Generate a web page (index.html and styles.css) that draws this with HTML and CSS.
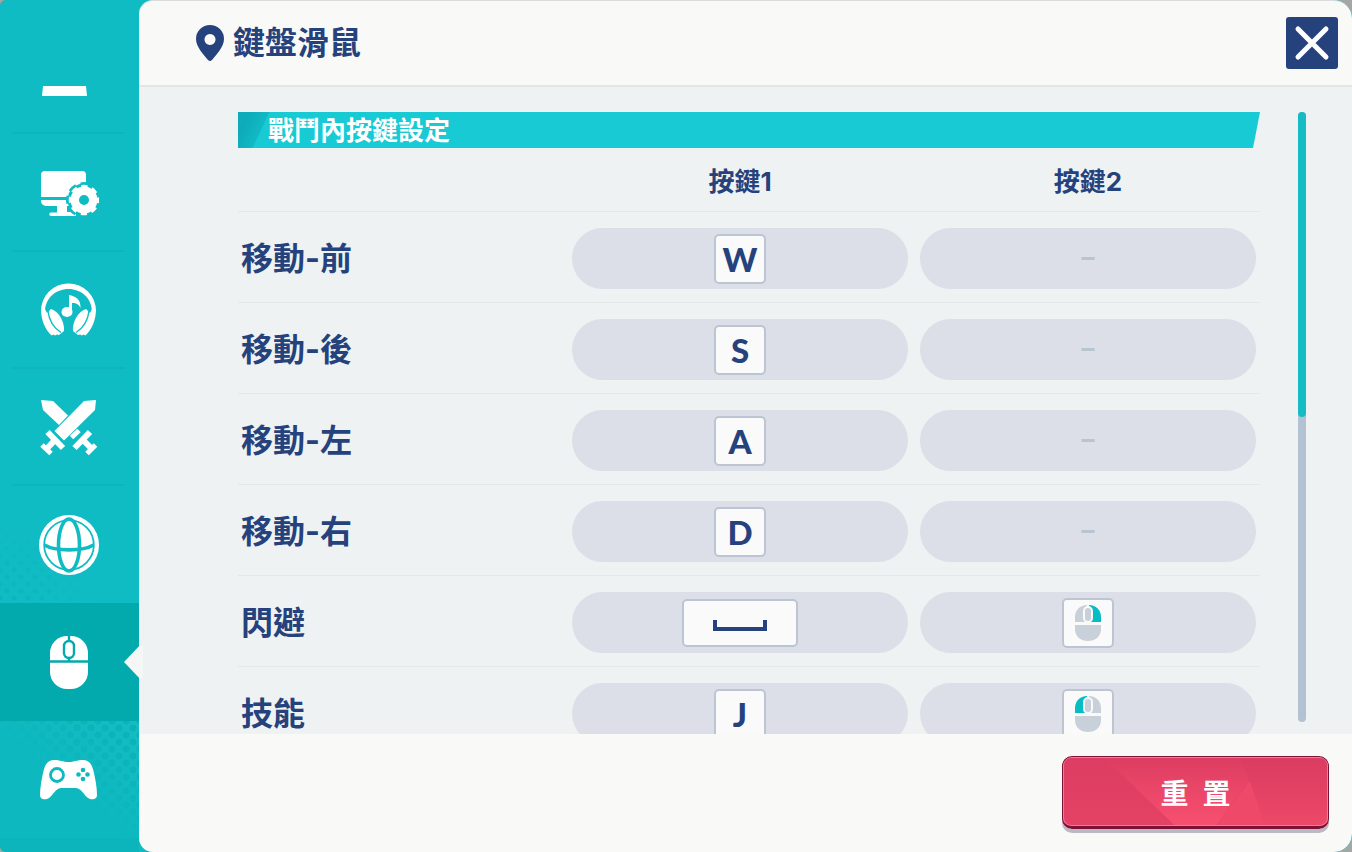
FILE: index.html
```html
<!DOCTYPE html>
<html lang="zh-Hant">
  <head>
    <meta charset="UTF-8" />
    <meta name="viewport" content="width=device-width, initial-scale=1.0" />
    <title>鍵盤滑鼠</title>
    <link rel="stylesheet" href="styles.css">
  </head>
  <body>
    <div class="app">
      <nav class="sidebar">
        <button class="tab" aria-label="一般">
          <svg class="icon" viewBox="0 0 60 60">
            <path class="fill" d="M4 40H47L48 50H3z" />
          </svg>
        </button>
        <button class="tab" aria-label="畫面">
          <svg class="icon" viewBox="0 0 60 60">
            <path class="fill" d="M6 8H43a4 4 0 0 1 4 4V34H2V12a4 4 0 0 1 4-4z" />
            <path class="fill" d="M2 37H47V43H28V49H37V53H12a1.500 1.500 0 0 1 0-3.500H18V43H7a5 5 0 0 1-5-5z" />
            <circle class="cut" cx="45" cy="37" r="16.500" />
            <circle class="line-cut" cx="45" cy="37" r="16.500" stroke-width="3" stroke-dasharray="8 4.959" stroke-dashoffset="4" />
            <circle class="fill" cx="45" cy="37" r="13.400" />
            <circle class="line" cx="45" cy="37" r="13.500" stroke-width="3.600" stroke-dasharray="6 4.603" stroke-dashoffset="3" />
            <circle class="cut" cx="45" cy="37" r="5" />
          </svg>
        </button>
        <button class="tab" aria-label="聲音">
          <svg class="icon" viewBox="0 0 60 60">
            <path class="fill" d="M2 31a27.500 27.500 0 0 1 55 0l-4 1c0-14-11-23-23.500-23S6 18 6 32z" />
            <g id="cup">
              <path class="fill" d="M2 29C2 40 6 49 12.500 55.500L14.500 54.500L16 55.500L18 54.500L20 55L25 51C26 43 20 31 12 29L8 33L6 29z" />
              <path class="line-cut" d="M9 31C10 40 15 48 22 52.500" stroke-width="1.400" />
            </g>
            <use href="#cup" transform="translate(59 0) scale(-1 1)" />
            <ellipse class="fill" cx="28" cy="32" rx="5.500" ry="5" />
            <path class="fill" d="M30 15C36 16 42 19 41.500 28C39 23 36 23 33 23V33H30z" />
          </svg>
        </button>
        <button class="tab" aria-label="戰鬥">
          <svg class="icon" viewBox="0 0 60 60">
            <path class="fill" d="M2 3L14 4L29 18.500L20 28L4 13z" />
            <path class="fill" d="M57 3L45 4L15.500 34L25 43.500L56 13z" />
            <path class="line" d="M8.500 35L24 51M16 43L7 52.500M51 35L35.500 51M43 42L53 52" stroke-width="6" />
            <path class="line" d="M3 48L12 56.500M56.500 48L48 56.500" stroke-width="5" />
            <path class="line" d="M32.500 40.500L40 33.500" stroke-width="5" />
          </svg>
        </button>
        <button class="tab" aria-label="語言">
          <svg class="icon" viewBox="0 0 60 60">
            <circle class="fill" cx="30" cy="30" r="30" />
            <circle class="line-cut" cx="30" cy="30" r="24.800" stroke-width="1.800" />
            <ellipse class="line-cut" cx="30" cy="30" rx="10.500" ry="26" stroke-width="3.600" />
            <path class="line-cut" d="M5.500 30C16 36.500 44 36.500 54.500 30" stroke-width="3.600" />
          </svg>
        </button>
        <button class="tab active" aria-label="鍵盤滑鼠" aria-current="page">
          <svg class="icon" viewBox="0 0 60 60">
            <rect class="fill" x="11" y="4" width="38" height="53" rx="17" />
            <path class="line-cut" d="M11 29.500H49M30 3V9M30 25V29" stroke-width="2.400" />
            <rect class="fill line-cut" x="25" y="9" width="10" height="17" rx="5" stroke-width="2.400" />
          </svg>
        </button>
        <button class="tab" aria-label="手把">
          <svg class="icon" viewBox="0 0 60 60">
            <path class="fill" d="M15 11C21 11 24 13 29.500 13S38 11 44 11C49 11 52 14 54 20C56 28 58 38 58 46C58 51 52 51 49 49C44 45 43 40 37 39H22C16 40 15 45 10 49C7 51 1 51 1 46C1 38 3 28 5 20C7 14 10 11 15 11z" />
            <circle class="line-cut" cx="18" cy="26" r="6.500" stroke-width="2.800" />
            <circle class="cut" cx="44" cy="21" r="2.300" />
            <circle class="cut" cx="44" cy="30" r="2.300" />
            <circle class="cut" cx="39.500" cy="25.500" r="2.300" />
            <circle class="cut" cx="48.500" cy="25.500" r="2.300" />
          </svg>
        </button>
      </nav>

      <main class="panel">
        <header class="header">
          <svg class="pin" viewBox="0 0 28 36">
            <path fill-rule="evenodd" d="M14 0a14 14 0 0 1 14 14C28 22 20 30 16 35Q14 37 12 35C8 30 0 22 0 14A14 14 0 0 1 14 0zM14 9a5.500 5.500 0 1 0 .01 0z" />
          </svg>
          <h1>鍵盤滑鼠</h1>
          <button class="close" aria-label="關閉">
            <svg viewBox="0 0 52 52">
              <path d="M12 12L40 40M40 12L12 40" />
            </svg>
          </button>
        </header>

        <div class="content">
          <section class="bindings">
            <h2 class="banner">戰鬥內按鍵設定</h2>
            <table>
              <thead>
                <tr>
                  <td class="name"></td>
                  <th>按鍵1</th>
                  <th>按鍵2</th>
                </tr>
              </thead>
              <tbody>
                <tr>
                  <th class="name">移動-前</th>
                  <td><button class="slot"><kbd>W</kbd></button></td>
                  <td><button class="slot empty">–</button></td>
                </tr>
                <tr>
                  <th class="name">移動-後</th>
                  <td><button class="slot"><kbd>S</kbd></button></td>
                  <td><button class="slot empty">–</button></td>
                </tr>
                <tr>
                  <th class="name">移動-左</th>
                  <td><button class="slot"><kbd>A</kbd></button></td>
                  <td><button class="slot empty">–</button></td>
                </tr>
                <tr>
                  <th class="name">移動-右</th>
                  <td><button class="slot"><kbd>D</kbd></button></td>
                  <td><button class="slot empty">–</button></td>
                </tr>
                <tr>
                  <th class="name">閃避</th>
                  <td>
                    <button class="slot" aria-label="空白鍵">
                      <kbd class="wide">
                        <svg class="space" viewBox="0 0 54 12"><path d="M2 0V9H52V0" /></svg>
                      </kbd>
                    </button>
                  </td>
                  <td>
                    <button class="slot" aria-label="滑鼠右鍵">
                      <kbd>
                        <svg class="mouse" viewBox="0 0 26 38">
                          <path class="off" d="M12 1V18H0V13C0 6 5 1 12 1zM0 21H26V25C26 33 20 37 13 37S0 33 0 25z" />
                          <path class="on" d="M14 1V18H26V13C26 6 21 1 14 1z" />
                          <rect class="wheel" x="9" y="3" width="8" height="15" rx="4" />
                        </svg>
                      </kbd>
                    </button>
                  </td>
                </tr>
                <tr>
                  <th class="name">技能</th>
                  <td><button class="slot"><kbd>J</kbd></button></td>
                  <td>
                    <button class="slot" aria-label="滑鼠左鍵">
                      <kbd>
                        <svg class="mouse" viewBox="0 0 26 38">
                          <path class="off" d="M14 1V18H26V13C26 6 21 1 14 1zM0 21H26V25C26 33 20 37 13 37S0 33 0 25z" />
                          <path class="on" d="M12 1V18H0V13C0 6 5 1 12 1z" />
                          <rect class="wheel" x="9" y="3" width="8" height="15" rx="4" />
                        </svg>
                      </kbd>
                    </button>
                  </td>
                </tr>
              </tbody>
            </table>
          </section>
          <div class="scrollbar"><div class="thumb"></div></div>
        </div>

        <footer class="footer">
          <button class="reset">
            <svg class="facets" viewBox="0 0 264 70" preserveAspectRatio="none">
              <defs>
                <linearGradient id="shine" x1="0" y1="0" x2="0" y2="1">
                  <stop offset="0" stop-color="#dd3d62" />
                  <stop offset="1" stop-color="#f8506f" />
                </linearGradient>
                <linearGradient id="side" x1="0" y1="0" x2="0" y2="1">
                  <stop offset="0" stop-color="#da3c61" />
                  <stop offset="1" stop-color="#ed4868" />
                </linearGradient>
              </defs>
              <path fill="url(#shine)" d="M40 0L112 70H152L188 20L176 0z" />
              <path fill="url(#side)" d="M176 0H264V70H202L186 24z" />
              <path fill="#ef4969" d="M186 24L202 70H152z" />
            </svg>
            <span>重&ensp;置</span>
          </button>
        </footer>
      </main>
    </div>
  </body>
</html>
```
FILE: styles.css
```css
* {
  box-sizing: border-box;
}
body {
  margin: 0;
  background-color: #a6a6a6;
  color: #26427c;
  font-family: "Inter", "Noto Sans CJK TC", sans-serif;
}
button {
  padding: 0;
  border: none;
  background: none;
  color: inherit;
  font: inherit;
  cursor: pointer;
}
svg {
  display: block;
}
.app {
  display: flex;
  height: 100vh;
  overflow: hidden;
  border-radius: 6px 18px 18px 6px;
  background-color: #10bcc4;
}

/* sidebar */
.sidebar {
  --bg: #10bcc4;
  position: relative;
  z-index: 1;
  display: flex;
  flex-direction: column;
  flex: 0 0 139px;
  padding: 17px 0 14px;
  background: linear-gradient(#10bcc4 70%, #0bb5bb);
}
.tab {
  position: relative;
  display: flex;
  flex: 1;
  align-items: center;
  justify-content: center;
  padding-right: 2px;
}
.tab::before {
  content: "";
  position: absolute;
  right: 14px;
  bottom: 0;
  left: 12px;
  height: 2px;
  background-color: #0eb5bd;
}
.tab:nth-last-child(-n + 3)::before {
  display: none;
}
/* faint dots around the last tabs */
.tab:nth-last-child(3) {
  background:
    radial-gradient(ellipse at 0 100%, transparent, #10bcc4 50%),
    radial-gradient(circle, #0db3ba 2px, transparent 3px) 0 0 / 14px 14px,
    radial-gradient(circle, #0db3ba 2px, transparent 3px) 7px 7px / 14px 14px;
}
.tab:last-child {
  --bg: #0db8bf;
  background:
    linear-gradient(to top right, #0db8bf 45%, transparent),
    radial-gradient(circle, #0bb1b7 3px, transparent 4px) 0 0 / 14px 14px,
    radial-gradient(circle, #0bb1b7 3px, transparent 4px) 7px 7px / 14px 14px,
    #13bdc3;
}
.tab.active {
  --bg: #02a9ad;
  background-color: #02a9ad;
}
.tab.active::after {
  content: "";
  position: absolute;
  top: 50%;
  right: -4px;
  width: 19px;
  height: 32px;
  margin-top: -16px;
  background-color: #f5f7f7;
  clip-path: polygon(0 50%, 80% 0, 100% 0, 100% 100%, 80% 100%);
}
.icon {
  width: 60px;
  height: 60px;
}
.fill {
  fill: #ffffff;
}
.cut {
  fill: var(--bg);
}
.line {
  fill: none;
  stroke: #ffffff;
}
.line-cut {
  stroke: var(--bg);
}
.line-cut:not(.fill) {
  fill: none;
}

/* panel */
.panel {
  display: flex;
  flex: 1;
  flex-direction: column;
  min-width: 0;
  overflow: hidden;
  border-top: 1px solid #d9dcdc;
  border-radius: 14px 18px 18px 14px;
  background-color: #f9faf8;
}
.header {
  display: flex;
  flex: none;
  align-items: center;
  gap: 9px;
  height: 86px;
  padding: 0 14px 0 57px;
  border-bottom: 2px solid #e3e6e6;
}
.pin {
  width: 28px;
  height: 36px;
  fill: #26427c;
}
h1 {
  margin: 0;
  font-size: 32px;
  line-height: 40px;
}
.close {
  width: 52px;
  height: 52px;
  margin-left: auto;
  border-radius: 3px;
  background-color: #26427c;
}
.close path {
  fill: none;
  stroke: #ffffff;
  stroke-width: 5;
  stroke-linecap: round;
}
.content {
  display: flex;
  flex: 1;
  gap: 38px;
  min-height: 0;
  padding: 25px 46px 0 99px;
  overflow: hidden;
  background-color: #eef2f3;
}
.bindings {
  flex: 1;
}
.banner {
  height: 36px;
  margin: 0;
  padding-left: 30px;
  background:
    linear-gradient(115deg, #0eacbb 12px, #10b4c1 22px, #12b9c5 28px, transparent 29px),
    #18cad3;
  clip-path: polygon(0 0, 100% 0, calc(100% - 7px) 100%, 0 100%);
  color: #ffffff;
  font-size: 26px;
  line-height: 38px;
}
table {
  width: 100%;
  border-collapse: separate;
  border-spacing: 0;
  table-layout: fixed;
}
.name {
  width: 334px;
}
th,
td {
  padding: 16px 4px 13px;
  border-bottom: 1px solid #e3e8e9;
}
th + td,
th:nth-child(2) {
  padding-right: 8px;
  padding-left: 0;
}
thead th,
thead td {
  height: 64px;
  padding-top: 16px;
  padding-bottom: 11px;
  font-size: 26px;
  line-height: 36px;
}
tbody .name {
  padding-left: 3px;
  font-size: 32px;
  line-height: 40px;
  text-align: left;
}
.slot {
  display: flex;
  align-items: center;
  justify-content: center;
  width: 100%;
  height: 61px;
  border-radius: 31px;
  background-color: #dcdfe7;
}
.slot:hover {
  background-color: #d3d8e2;
}
.empty {
  padding-bottom: 4px;
  color: #b9c4d0;
  font-size: 26px;
  font-weight: 700;
}
kbd {
  display: flex;
  align-items: center;
  justify-content: center;
  width: 52px;
  height: 50px;
  border: 2px solid #bcc5d1;
  border-radius: 5px;
  background-color: #f9faf9;
  font-family: "Lato", sans-serif;
  font-size: 33px;
  font-weight: 900;
  line-height: 32px;
}
.wide {
  width: 116px;
  height: 48px;
}
.space {
  width: 54px;
  height: 12px;
  margin-top: 6px;
}
.space path {
  fill: none;
  stroke: #26427c;
  stroke-width: 4;
}
.mouse {
  width: 26px;
  height: 38px;
}
.off {
  fill: #c8d0d9;
}
.on {
  fill: #08bcc4;
}
.wheel {
  fill: #c8d0d9;
  stroke: #f9faf9;
  stroke-width: 2;
}
.scrollbar {
  flex: 0 0 8px;
  margin-bottom: 12px;
  border-radius: 4px;
  background-color: #b3c2d2;
}
.thumb {
  height: 50%;
  border-radius: 4px;
  background-color: #16bcc3;
}

/* footer */
.footer {
  display: flex;
  flex: none;
  justify-content: flex-end;
  padding: 22px 23px 23px;
}
.reset {
  position: relative;
  width: 267px;
  height: 73px;
  overflow: hidden;
  border: 1px solid #7d1238;
  border-bottom-width: 3px;
  border-radius: 10px;
  background: linear-gradient(#dd3d62, #e44265);
  box-shadow: 0 4px 0 #bdb9c2;
  color: #ffffff;
  font-size: 28px;
  font-weight: 700;
}
.reset::after {
  content: "";
  position: absolute;
  inset: 0;
  border: 1px solid #f57a94;
  border-radius: 8px;
}
.reset span {
  position: relative;
}
.facets {
  position: absolute;
  top: 0;
  left: 0;
  width: 100%;
  height: 100%;
}
```
